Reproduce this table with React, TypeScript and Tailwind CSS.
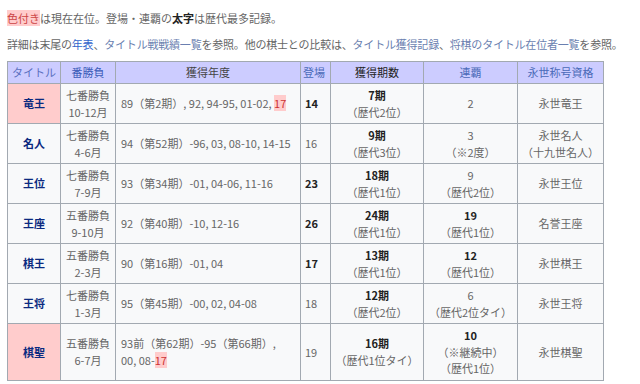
const font = { fontFamily: '"Noto Sans CJK JP", "Noto Sans", sans-serif' };

interface IRow {
  title: string;
  current: boolean;
  match: string[];
  years: React.ReactNode;
  appear: string;
  appearBold: boolean;
  periods: string[];
  streak: string[];
  streakBold: boolean;
  eternal: string[];
}

const Hl = ({ children }: { children: React.ReactNode }) => (
  <span className="bg-[#fcc] text-[#c33]">{children}</span>
);

const rows: IRow[] = [
  {
    title: "竜王",
    current: true,
    match: ["七番勝負", "10-12月"],
    years: (
      <>
        89（第2期）, 92, 94-95, 01-02, <Hl>17</Hl>
      </>
    ),
    appear: "14",
    appearBold: true,
    periods: ["7期", "（歴代2位）"],
    streak: ["2"],
    streakBold: false,
    eternal: ["永世竜王"],
  },
  {
    title: "名人",
    current: false,
    match: ["七番勝負", "4-6月"],
    years: "94（第52期）-96, 03, 08-10, 14-15",
    appear: "16",
    appearBold: false,
    periods: ["9期", "（歴代3位）"],
    streak: ["3", "（※2度）"],
    streakBold: false,
    eternal: ["永世名人", "（十九世名人）"],
  },
  {
    title: "王位",
    current: false,
    match: ["七番勝負", "7-9月"],
    years: "93（第34期）-01, 04-06, 11-16",
    appear: "23",
    appearBold: true,
    periods: ["18期", "（歴代1位）"],
    streak: ["9", "（歴代2位）"],
    streakBold: false,
    eternal: ["永世王位"],
  },
  {
    title: "王座",
    current: false,
    match: ["五番勝負", "9-10月"],
    years: "92（第40期）-10, 12-16",
    appear: "26",
    appearBold: true,
    periods: ["24期", "（歴代1位）"],
    streak: ["19", "（歴代1位）"],
    streakBold: true,
    eternal: ["名誉王座"],
  },
  {
    title: "棋王",
    current: false,
    match: ["五番勝負", "2-3月"],
    years: "90（第16期）-01, 04",
    appear: "17",
    appearBold: true,
    periods: ["13期", "（歴代1位）"],
    streak: ["12", "（歴代1位）"],
    streakBold: true,
    eternal: ["永世棋王"],
  },
  {
    title: "王将",
    current: false,
    match: ["七番勝負", "1-3月"],
    years: "95（第45期）-00, 02, 04-08",
    appear: "18",
    appearBold: false,
    periods: ["12期", "（歴代2位）"],
    streak: ["6", "（歴代2位タイ）"],
    streakBold: false,
    eternal: ["永世王将"],
  },
  {
    title: "棋聖",
    current: true,
    match: ["五番勝負", "6-7月"],
    years: (
      <>
        93前（第62期）-95（第66期）,
        <br />
        00, 08-<Hl>17</Hl>
      </>
    ),
    appear: "19",
    appearBold: false,
    periods: ["16期", "（歴代1位タイ）"],
    streak: ["10", "（※継続中）", "（歴代1位）"],
    streakBold: true,
    eternal: ["永世棋聖"],
  },
];

const cell = "border border-[#a2a9b1] px-[4px] py-[3px] align-middle";
const th = "border border-[#a2a9b1] px-[2px] py-[3px] font-normal whitespace-nowrap";

export default function App() {
  return (
    <div className="w-[640px] h-[384px] bg-white overflow-hidden text-[11px] leading-[16.5px] text-[#666]" style={font}>
      <div className="pl-[7px] pt-[10px] leading-[16px]">
        <p>
          <span className="bg-[#fcc] text-[#c44]">色付き</span>は現在在位。登場・連覇の
          <span className="font-bold text-[#222]">太字</span>は歴代最多記録。
        </p>
        <p className="mt-[10px] tracking-[-0.2px] whitespace-nowrap">
          詳細は末尾の<span className="text-[#36c]">年表</span>、
          <span className="text-[#6a7fb0]">タイトル戦戦績一覧</span>を参照。他の棋士との比較は、
          <span className="text-[#6a7fb0]">タイトル獲得記録</span>、
          <span className="text-[#6a7fb0]">将棋のタイトル在位者一覧</span>を参照。
        </p>
      </div>

      <table className="ml-[7px] mt-[9px] border-collapse bg-[#f8f9fa] w-[596px] table-fixed">
        <colgroup>
          <col className="w-[53px]" />
          <col className="w-[55px]" />
          <col className="w-[185px]" />
          <col className="w-[30px]" />
          <col className="w-[93px]" />
          <col className="w-[94px]" />
          <col className="w-[86px]" />
        </colgroup>
        <thead>
          <tr className="bg-[#ccf] leading-[15px]">
            <th className={`${th} text-[#5a6fc0]`}>タイトル</th>
            <th className={`${th} text-[#3a5bb8]`}>番勝負</th>
            <th className={`${th} text-[#444]`}>獲得年度</th>
            <th className={`${th} text-[#4a6ab8] text-left`}>登場</th>
            <th className={`${th} font-bold text-[#222]`}>獲得期数</th>
            <th className={`${th} text-[#4a6ab8]`}>連覇</th>
            <th className={`${th} text-[#4a6ab8]`}>永世称号資格</th>
          </tr>
        </thead>
        <tbody>
          {rows.map((row) => (
            <tr key={row.title}>
              <td className={`${cell} text-center font-bold text-[#0b2a80] ${row.current ? "bg-[#fcc]" : ""}`}>
                {row.title}
              </td>
              <td className={`${cell} text-center`}>
                {row.match.map((m) => (
                  <div key={m}>{m}</div>
                ))}
              </td>
              <td className={`${cell} pl-[5px]`}>{row.years}</td>
              <td className={`${cell} px-[2px] ${row.appearBold ? "font-bold text-[#222]" : ""}`}>{row.appear}</td>
              <td className={`${cell} text-center`}>
                <div className="font-bold text-[#222]">{row.periods[0]}</div>
                <div>{row.periods[1]}</div>
              </td>
              <td className={`${cell} text-center`}>
                {row.streak.map((s, idx) => (
                  <div key={idx} className={idx === 0 && row.streakBold ? "font-bold text-[#222]" : ""}>
                    {s}
                  </div>
                ))}
              </td>
              <td className={`${cell} text-center`}>
                {row.eternal.map((e) => (
                  <div key={e}>{e}</div>
                ))}
              </td>
            </tr>
          ))}
        </tbody>
      </table>
    </div>
  );
}
